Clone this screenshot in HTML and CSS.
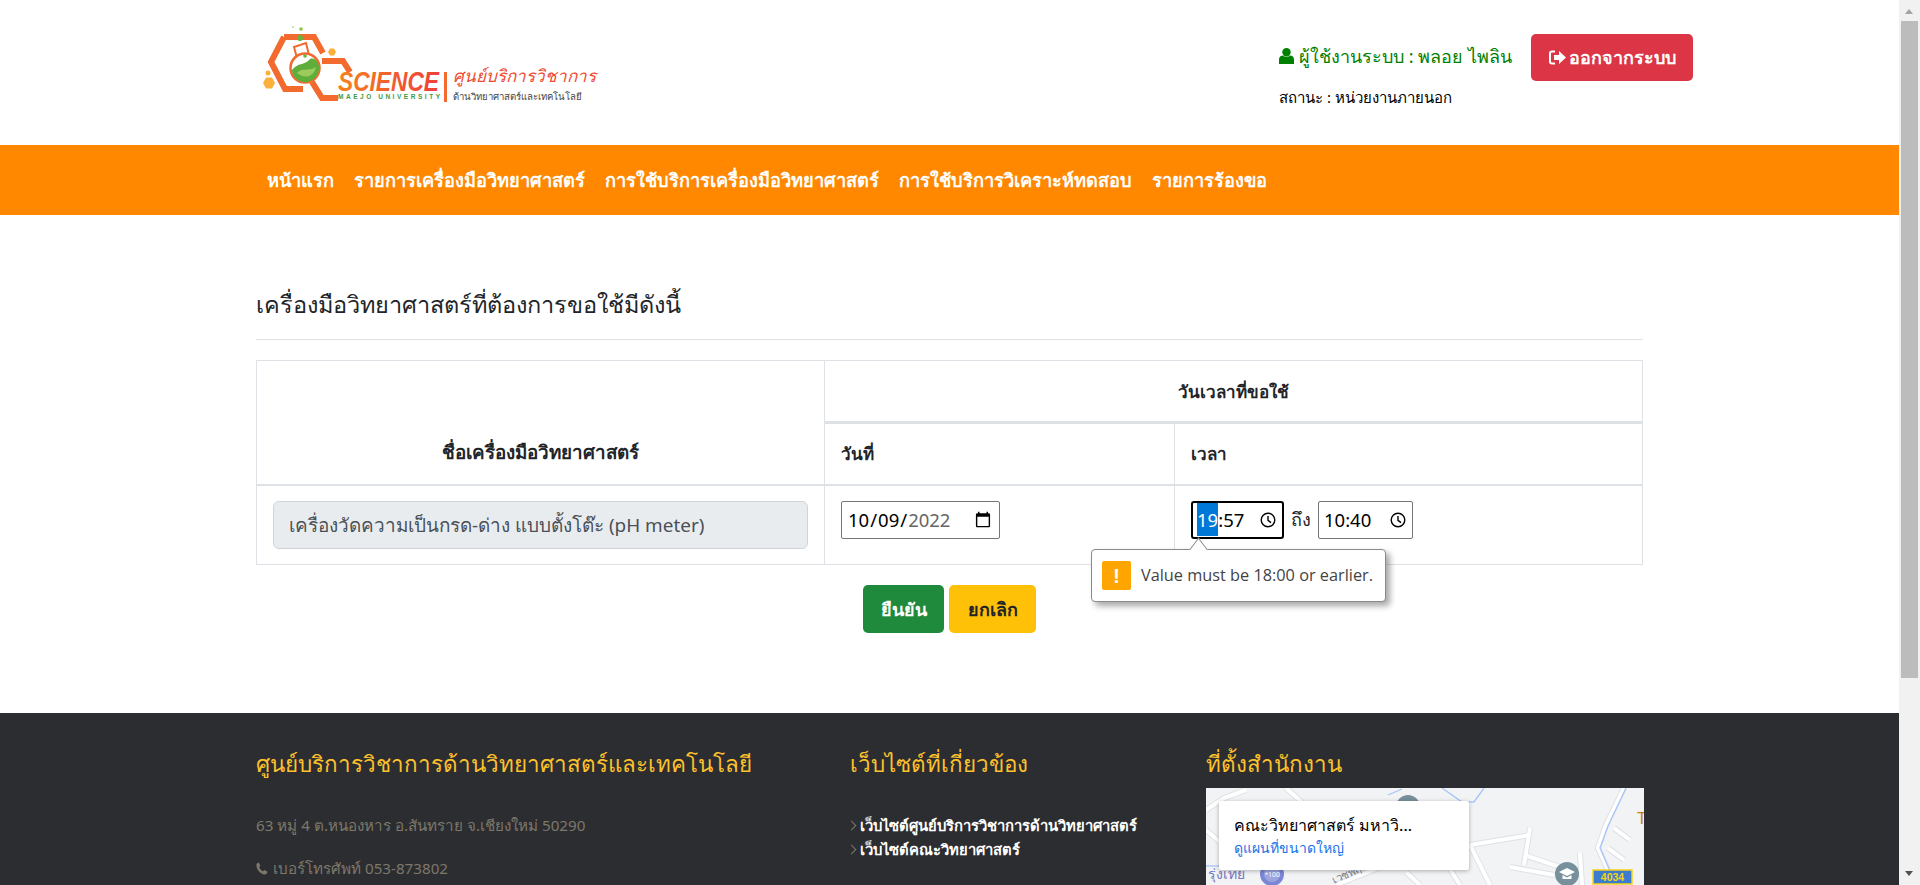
FILE: index.html
```html
<!DOCTYPE html>
<html lang="th">
<head>
    <meta charset="UTF-8">
    <meta name="viewport" content="width=device-width, initial-scale=1.0">
    <title>ศูนย์บริการวิชาการ</title>
    <link rel="stylesheet" href="styles.css">
</head>
<body>
<div class="page">
    <header class="top">
        <svg class="logo" width="340" height="90" viewBox="0 0 340 90">
            <defs>
                <linearGradient id="sci" x1="0" x2="1" y1="0" y2="0">
                    <stop offset="0" stop-color="#f58220"/>
                    <stop offset="1" stop-color="#ee3f3a"/>
                </linearGradient>
            </defs>
            <!-- hexagons -->
            <g fill="none" stroke="#f26a2e" stroke-width="6">
                <path d="M24 17 H54 L63 33"/>
                <path d="M24 17 L11 42 L25 69 H43"/>
                <path d="M62 41 H83 L90 52"/>
                <path d="M52 62 L62 78 H78"/>
            </g>
            <!-- flask -->
            <path d="M34 27 L46 23 L49 35 L37 38Z" fill="#fff" stroke="#f26a2e" stroke-width="2"/>
            <circle cx="45" cy="48" r="14.500" fill="#fff" stroke="#f26a2e" stroke-width="2.500"/>
            <path d="M32 50 C38 42 44 46 50 39 C55 37 60 43 59 50 C58 58 50 63 43 62 C37 61 32 56 32 50Z" fill="#5fae3c"/>
            <path d="M37 53 C42 47 48 52 56 47 C54 56 46 60 37 53Z" fill="#9ccb5b"/>
            <!-- drops -->
            <circle cx="40" cy="18" r="3" fill="#6ab33e"/>
            <circle cx="41" cy="9" r="1.800" fill="#8cc63f"/>
            <circle cx="33" cy="7" r="0.800" fill="#8cc63f"/>
            <circle cx="45" cy="36" r="1.800" fill="#6ab33e"/>
            <polygon points="68,32 70,28.500 74,28.500 76,32 74,35.500 70,35.500" fill="#fbb03b"/>
            <polygon points="3,63 6,57.500 12,57.500 15,63 12,68.500 6,68.500" fill="#fbb03b"/>
            <circle cx="8" cy="53" r="2.500" fill="#fbb03b"/>
            <!-- wordmark -->
            <text class="logo-science" x="78" y="71" textLength="101" lengthAdjust="spacingAndGlyphs" fill="url(#sci)">SCIENCE</text>
            <text class="logo-maejo" x="78" y="79" textLength="102" fill="#3d9a46">MAEJO UNIVERSITY</text>
            <rect x="184" y="52" width="3" height="30" fill="#f26a2e"/>
            <text class="logo-th1" x="193" y="62" fill="#ef4a32">ศูนย์บริการวิชาการ</text>
            <text class="logo-th2" x="193" y="80" fill="#444">ด้านวิทยาศาสตร์และเทคโนโลยี</text>
        </svg>
        <div class="user-box">
            <div class="user-row">
                <span class="user-name">
                    <svg class="icon-user" width="15" height="16" viewBox="0 0 15 16"><circle cx="7.500" cy="4.200" r="4.200" fill="#008000"/><path d="M0 16 V11.500 C0 8.800 2 7.600 3.600 7.400 C5.800 9.200 9.200 9.200 11.400 7.400 C13 7.600 15 8.800 15 11.500 V16Z" fill="#008000"/></svg>
                    ผู้ใช้งานระบบ : พลอย ไพลิน
                </span>
                <a class="btn btn-logout" href="#">
                    <svg width="17" height="15" viewBox="0 0 17 15"><path d="M6 1.500 H3 C1.800 1.500 1 2.300 1 3.500 V11.500 C1 12.700 1.800 13.500 3 13.500 H6" fill="none" stroke="#fff" stroke-width="2"/><path d="M5 5 H10 V1 L17 7.500 L10 14 V10 H5Z" fill="#fff"/></svg>ออกจากระบบ
                </a>
            </div>
            <div class="user-status">สถานะ : หน่วยงานภายนอก</div>
        </div>
    </header>

    <nav class="menu">
        <a href="#">หน้าแรก</a>
        <a href="#">รายการเครื่องมือวิทยาศาสตร์</a>
        <a href="#">การใช้บริการเครื่องมือวิทยาศาสตร์</a>
        <a href="#">การใช้บริการวิเคราะห์ทดสอบ</a>
        <a href="#">รายการร้องขอ</a>
    </nav>

    <main class="content">
        <h2 class="title">เครื่องมือวิทยาศาสตร์ที่ต้องการขอใช้มีดังนี้</h2>
        <hr class="line">
        <table class="booking">
            <colgroup>
                <col class="col-a">
                <col class="col-b">
                <col>
            </colgroup>
            <thead>
                <tr class="row-head1">
                    <th rowspan="2" class="col-name">ชื่อเครื่องมือวิทยาศาสตร์</th>
                    <th colspan="2">วันเวลาที่ขอใช้</th>
                </tr>
                <tr class="row-head2">
                    <th>วันที่</th>
                    <th>เวลา</th>
                </tr>
            </thead>
            <tbody>
                <tr class="row-body">
                    <td><div class="readonly">เครื่องวัดความเป็นกรด-ด่าง แบบตั้งโต๊ะ (pH meter)</div></td>
                    <td><input class="date-input" type="date" value="2022-10-09"></td>
                    <td class="time-cell">
                        <div class="time-group">
                            <div class="time-field focused">
                                <span class="time-text"><span class="sel">19</span>:57</span>
                                <svg class="clock" width="16" height="16" viewBox="0 0 16 16"><circle cx="8" cy="8" r="6.800" fill="none" stroke="#000" stroke-width="1.400"/><path d="M8 4 V8.300 L11 10.600" fill="none" stroke="#000" stroke-width="1.400"/></svg>
                            </div>
                            <span class="to">ถึง</span>
                            <div class="time-field wide">
                                <span class="time-text">10:40</span>
                                <svg class="clock" width="16" height="16" viewBox="0 0 16 16"><circle cx="8" cy="8" r="6.800" fill="none" stroke="#000" stroke-width="1.400"/><path d="M8 4 V8.300 L11 10.600" fill="none" stroke="#000" stroke-width="1.400"/></svg>
                            </div>
                        </div>
                        <div class="bubble">
                            <span class="bubble-arrow"></span>
                            <span class="bubble-icon">!</span>
                            <span class="bubble-text">Value must be 18:00 or earlier.</span>
                        </div>
                    </td>
                </tr>
            </tbody>
        </table>
        <div class="actions">
            <button class="btn btn-ok" type="button">ยืนยัน</button>
            <button class="btn btn-cancel" type="button">ยกเลิก</button>
        </div>
    </main>

    <footer class="foot">
        <div class="foot-col">
            <h3>ศูนย์บริการวิชาการด้านวิทยาศาสตร์และเทคโนโลยี</h3>
            <p class="foot-text first">63 หมู่ 4 ต.หนองหาร อ.สันทราย จ.เชียงใหม่ 50290</p>
            <p class="foot-text phone">
                <svg width="12" height="13" viewBox="0 0 12 13"><path d="M2.600 0.600 L4.400 3.600 L3.200 5 C3.800 6.800 5.200 8.400 7 9.200 L8.400 7.900 L11.600 9.700 C11.400 11.200 10 12.600 8.600 12.500 C4.400 12 0.600 7.600 0.400 3.400 C0.400 2 1.200 1 2.600 0.600Z" fill="#7d786a"/></svg>
                เบอร์โทรศัพท์ 053-873802
            </p>
        </div>
        <div class="foot-col">
            <h3>เว็บไซต์ที่เกี่ยวข้อง</h3>
            <ul class="foot-links">
                <li><a href="#">เว็บไซต์ศูนย์บริการวิชาการด้านวิทยาศาสตร์</a></li>
                <li><a href="#">เว็บไซต์คณะวิทยาศาสตร์</a></li>
            </ul>
        </div>
        <div class="foot-col">
            <h3>ที่ตั้งสำนักงาน</h3>
            <div class="map">
                <svg class="map-art" width="438" height="97" viewBox="0 0 438 97">
                    <defs>
                        <g id="roads" fill="none">
                            <path d="M418 0 L400 37 L392 60 L408 95"/>
                            <path d="M264 57 L324 47"/>
                            <path d="M324 40 L318 77"/>
                            <path d="M318 67 L354 79"/>
                            <path d="M304 79 L348 87"/>
                            <path d="M264 57 L284 97"/>
                            <path d="M374 65 L376 97"/>
                            <path d="M408 40 L424 52"/>
                            <path d="M402 60 L418 72"/>
                            <path d="M0 22 L18 10 L40 2"/>
                            <path d="M0 42 L14 54"/>
                            <path d="M80 0 L100 18"/>
                            <path d="M130 97 L180 77 L214 66"/>
                            <path d="M200 84 L214 97"/>
                            <path d="M232 62 L254 97"/>
                        </g>
                    </defs>
                    <use href="#roads" stroke="#dfe1e5" stroke-width="6"/>
                    <use href="#roads" stroke="#fff" stroke-width="4"/>
                    <path d="M420 0 L402 38 L394 60 L407 90" fill="none" stroke="#a6c5f7" stroke-width="1.300"/>
                    <path d="M182 7 L196 1 M236 0 L256 14 L268 14 L278 0" fill="none" stroke="#a6c5f7" stroke-width="1.300"/>
                    <path d="M0 78 L18 78" fill="none" stroke="#a6c5f7" stroke-width="1.300"/>
                    <circle cx="202" cy="19" r="12" fill="#78909c"/>
                    <circle cx="361" cy="86" r="12" fill="#78909c"/>
                    <path d="M353 84 L361 80 L369 84 L361 88Z M356.500 87 V91 H365.500 V87 L361 89.500Z" fill="#fff"/>
                    <circle cx="66" cy="86" r="12" fill="#7b86d6"/>
                    <circle cx="66" cy="86" r="8" fill="#fff" opacity="0.250"/>
                    <text class="map-badge" x="59" y="89" fill="#fff">*100</text>
                    <text class="map-place" x="2" y="91" fill="#7276c4">รุ่งเทย</text>
                    <text class="map-street" transform="translate(128 96) rotate(-24)" fill="#7d8084">เวชพฤกษ์</text>
                    <text class="map-t" x="431" y="36" fill="#c8791d">T</text>
                    <rect x="387" y="82" width="39" height="14" fill="#3d7bd0" stroke="#f7d417" stroke-width="1.500"/>
                    <text class="map-shield" x="406.500" y="93" fill="#f7d417">4034</text>
                </svg>
                <div class="map-card">
                    <div class="map-card-title">คณะวิทยาศาสตร์ มหาวิ...</div>
                    <a class="map-card-link" href="#">ดูแผนที่ขนาดใหญ่</a>
                </div>
            </div>
        </div>
    </footer>
</div>
<aside class="scrollbar">
    <span class="arrow-up"></span>
    <span class="thumb"></span>
    <span class="arrow-down"></span>
</aside>
</body>
</html>
```
FILE: styles.css
```css
* {
    box-sizing: border-box;
}
body {
    margin: 0;
    height: 100vh;
    overflow: hidden;
    display: flex;
    font-family: "Noto Sans", sans-serif;
    color: #212529;
    background: #fff;
}
a {
    text-decoration: none;
}
.page {
    flex: 1;
    min-width: 0;
    height: 100%;
    overflow: hidden;
}

/* header */
.top {
    height: 145px;
    padding: 0 206px 0 260px;
    display: flex;
    justify-content: space-between;
}
.logo {
    margin-top: 20px;
}
.logo-science {
    font: italic bold 27px "Liberation Sans", sans-serif;
}
.logo-maejo {
    font: bold 6.500px "Liberation Sans", sans-serif;
}
.logo-th1 {
    font: italic 17px "Noto Sans", sans-serif;
}
.logo-th2 {
    font: 9.600px "Noto Sans", sans-serif;
}
.user-box {
    padding-top: 34px;
}
.user-row {
    display: flex;
    align-items: center;
    gap: 19px;
}
.user-name {
    color: #008000;
    font-size: 18px;
    margin-top: -3px;
    display: flex;
    align-items: center;
    gap: 5px;
}
.user-status {
    font-size: 15px;
    line-height: 22px;
    margin-top: 5px;
    color: #000;
}

/* buttons */
.btn {
    display: inline-flex;
    align-items: center;
    justify-content: center;
    height: 47px;
    border: none;
    border-radius: 5px;
    font-family: inherit;
    font-size: 18px;
    font-weight: 600;
}
.btn-logout {
    width: 162px;
    background: #dc3545;
    color: #fff;
    gap: 3px;
}
.btn-ok {
    width: 81px;
    height: 48px;
    background: #208a3c;
    color: #fff;
}
.btn-cancel {
    width: 87px;
    height: 48px;
    background: #ffc107;
    color: #212529;
}

/* menu */
.menu {
    height: 70px;
    padding-left: 267px;
    background: #ff8800;
    display: flex;
    align-items: center;
    gap: 20px;
}
.menu a {
    color: #fff;
    font-size: 18.250px;
    font-weight: 600;
}

/* content */
.content {
    padding: 71px 256px 0;
}
.title {
    margin: 0;
    font-size: 23.500px;
    line-height: 36px;
    font-weight: 400;
}
.line {
    margin: 17px 0 20px;
    border: none;
    border-top: 1px solid #dee2e6;
}
.booking {
    width: 1387px;
    table-layout: fixed;
    border-collapse: collapse;
    font-size: 17px;
}
.col-a {
    width: 568px;
}
.col-b {
    width: 350px;
}
.booking th,
.booking td {
    border: 1px solid #dee2e6;
    padding: 0 16px;
    text-align: left;
}
.booking .row-head1 th {
    text-align: center;
}
.booking th {
    font-weight: 600;
}
.row-head1 {
    height: 62px;
}
.row-head1 th {
    border-bottom-width: 3px;
}
.row-head2 {
    height: 62px;
}
.row-head2 th {
    border-bottom-width: 2px;
}
.booking .col-name {
    vertical-align: bottom;
    padding-bottom: 17px;
    border-bottom-width: 2px;
    font-size: 18.800px;
}
.row-body {
    height: 80px;
}
.readonly {
    height: 48px;
    padding: 0 15px;
    display: flex;
    align-items: center;
    background: #e9ecef;
    border: 1px solid #ced4da;
    border-radius: 6px;
    color: #495057;
    font-size: 18.900px;
}
.date-input {
    display: block;
    width: 159px;
    height: 38px;
    padding: 0 5px;
    border: 1px solid #767676;
    border-radius: 2px;
    background: #fff;
    font-family: inherit;
    font-size: 18.500px;
    color: #000;
    margin-top: -10px;
}
.date-input::-webkit-datetime-edit-year-field {
    color: #666;
}
.time-cell {
    position: relative;
}
.time-group {
    display: flex;
    align-items: center;
    margin-top: -10px;
}
.time-field {
    width: 93px;
    height: 38px;
    padding: 0 6px 0 5px;
    display: flex;
    align-items: center;
    justify-content: space-between;
    border: 1px solid #767676;
    border-radius: 2px;
    font-size: 18.500px;
    color: #000;
}
.time-field.wide {
    width: 95px;
}
.time-field.focused {
    border: 2px solid #000;
    padding-left: 4px;
    border-radius: 3px;
}
.sel {
    background: #0078d7;
    color: #fff;
    padding: 4px 0;
}
.to {
    width: 34px;
    text-align: center;
    font-size: 18px;
}

/* validation bubble */
.bubble {
    position: absolute;
    left: -84px;
    top: 63px;
    width: 295px;
    height: 53px;
    padding-left: 10px;
    display: flex;
    align-items: center;
    gap: 10px;
    background: #fff;
    border: 1px solid #8a8a8a;
    border-radius: 4px;
    box-shadow: 4px 4px 6px rgba(0, 0, 0, 0.35);
}
.bubble-arrow {
    position: absolute;
    left: 99px;
    top: -8px;
    width: 15px;
    height: 15px;
    background: #fff;
    border-left: 1px solid #8a8a8a;
    border-top: 1px solid #8a8a8a;
    transform: rotate(45deg) skew(8deg, 8deg);
}
.bubble-icon {
    width: 29px;
    height: 29px;
    border-radius: 2px;
    background: #ffa500;
    color: #fff;
    font: bold 21px/29px "Liberation Sans", sans-serif;
    text-align: center;
}
.bubble-text {
    font: 16.300px "Open Sans", sans-serif;
    color: #444;
    white-space: nowrap;
}
.actions {
    margin-top: 20px;
    display: flex;
    justify-content: center;
    gap: 5px;
}

/* footer */
.foot {
    margin-top: 80px;
    height: 300px;
    padding: 34px 0 0 256px;
    background: #2c2d31;
    display: grid;
    grid-template-columns: 594px 356px 438px;
}
.foot h3 {
    margin: 0;
    color: #fdc12c;
    font-size: 22.400px;
    line-height: 34px;
    font-weight: 400;
}
.foot-text {
    margin: 0;
    color: #7d786a;
    font-size: 15.200px;
    line-height: 24px;
}
.foot-text.first {
    margin-top: 32px;
}
.foot-text.phone {
    margin-top: 19px;
    display: flex;
    align-items: center;
    gap: 5px;
}
.foot-links {
    list-style: none;
    margin: 32px 0 0;
    padding: 0;
}
.foot-links li {
    line-height: 24px;
    padding-left: 10px;
    position: relative;
}
.foot-links li::before {
    content: "";
    position: absolute;
    left: -2px;
    top: 9px;
    width: 6px;
    height: 6px;
    border-top: 1px solid #7d786a;
    border-right: 1px solid #7d786a;
    transform: rotate(45deg);
}
.foot-links a {
    color: #fff;
    font-size: 14.800px;
    font-weight: 600;
}

/* map */
.map {
    position: relative;
    margin-top: 7px;
    width: 438px;
    height: 200px;
    background: #f1f3f4;
    overflow: hidden;
}
.map-art {
    display: block;
}
.map-card {
    position: absolute;
    left: 13px;
    top: 13px;
    width: 250px;
    height: 69px;
    padding: 13px 15px;
    background: #fff;
    border-radius: 2px;
    box-shadow: 0 1px 4px rgba(0, 0, 0, 0.3);
}
.map-card-title {
    font: 500 16px/24px Roboto, "Noto Sans", sans-serif;
    color: #000;
}
.map-card-link {
    display: block;
    font: 14px/20px Roboto, "Noto Sans", sans-serif;
    color: #1a73e8;
}
.map-badge {
    font: 7px Roboto, sans-serif;
}
.map-place {
    font: 14px "Noto Sans", sans-serif;
}
.map-street {
    font: 11px "Noto Sans", sans-serif;
}
.map-t {
    font: 16px Roboto, sans-serif;
}
.map-shield {
    font: bold 10.500px "Liberation Sans", sans-serif;
    text-anchor: middle;
}

/* page scrollbar */
.scrollbar {
    width: 21px;
    height: 100%;
    flex: none;
    position: relative;
    background: #f1f1f1;
}
.thumb {
    position: absolute;
    left: 2px;
    top: 21px;
    width: 17px;
    height: 657px;
    background: #bcbcbc;
}
.arrow-up,
.arrow-down {
    position: absolute;
    left: 6px;
    width: 0;
    height: 0;
    border-left: 4.500px solid transparent;
    border-right: 4.500px solid transparent;
}
.arrow-up {
    top: 9px;
    border-bottom: 5px solid #a3a3a3;
}
.arrow-down {
    bottom: 9px;
    border-top: 5px solid #505050;
}
```
